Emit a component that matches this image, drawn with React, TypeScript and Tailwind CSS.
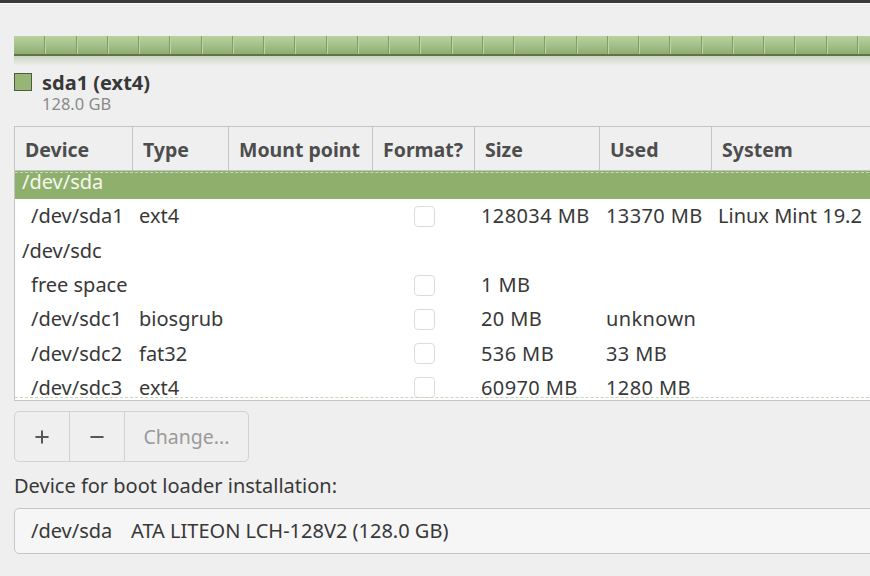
import React from 'react';
import { Plus, Minus } from 'lucide-react';

type Row = {
  device: string;
  type?: string;
  size?: string;
  used?: string;
  system?: string;
  child?: boolean;
  check?: boolean;
  selected?: boolean;
};

const rows: Row[] = [
  { device: '/dev/sda', selected: true },
  { device: '/dev/sda1', type: 'ext4', size: '128034 MB', used: '13370 MB', system: 'Linux Mint 19.2', child: true, check: true },
  { device: '/dev/sdc' },
  { device: 'free space', size: '1 MB', child: true, check: true },
  { device: '/dev/sdc1', type: 'biosgrub', size: '20 MB', used: 'unknown', child: true, check: true },
  { device: '/dev/sdc2', type: 'fat32', size: '536 MB', used: '33 MB', child: true, check: true },
  { device: '/dev/sdc3', type: 'ext4', size: '60970 MB', used: '1280 MB', child: true, check: true },
];

const cols = 'grid grid-cols-[118px_96px_144px_102px_125px_112px_1fr]';

export default function App() {
  return (
    <div
      className="w-[870px] h-[576px] overflow-hidden bg-[#efefef] text-[#383838]"
      style={{ fontFamily: '"Noto Sans", "Open Sans", sans-serif' }}
    >
      {/* window edge */}
      <div className="h-[3px] bg-[#3b3b3b]" />
      <div className="h-px bg-[#fafafa]" />

      <div className="pl-[14px]">
        {/* Partition bar */}
        <div className="mt-[32px] w-[880px]">
          <div className="flex h-[20px] border-b-2 border-[#5f7549] bg-gradient-to-b from-[#b9d2a0] via-[#a4c189] to-[#8ead72]">
            {Array.from({ length: 29 }).map((_, i) => (
              <div key={i} className="w-[31.25px] shrink-0 border-r border-r-[#809d66] shadow-[1px_0_0_#bcd4a6]" />
            ))}
          </div>
          <div className="h-[10px] bg-gradient-to-b from-[#cbd5c1] to-[#efefef]" />
        </div>

        {/* Legend */}
        <div className="mt-[6px] flex items-start gap-[10px]">
          <div className="mt-px h-[18px] w-[18px] border border-[#4f5a45] bg-[#97b676]" />
          <div>
            <div className="text-[20px] font-bold leading-[22px] text-[#383838]">sda1 (ext4)</div>
            <div className="text-[16.5px] leading-[20px] text-[#8a8a8a]">128.0 GB</div>
          </div>
        </div>

        {/* Table */}
        <div className="mt-[12px] w-[900px] border-l border-t border-b border-[#c4c4c4]">
          <div className={`${cols} h-[44px] bg-[#efefef] border-b border-[#c4c4c4] text-[19.5px] font-bold text-[#4d4d4d]`}>
            {['Device', 'Type', 'Mount point', 'Format?', 'Size', 'Used', 'System'].map((h, i) => (
              <div key={h} className={`flex items-center pl-[10px] pt-[3px] ${i < 6 ? 'border-r border-[#c4c4c4]' : ''}`}>
                {h}
              </div>
            ))}
          </div>
          <div className="relative h-[229px] overflow-hidden bg-white text-[20px]">
            <div className="-mt-[6px]">
              {rows.map((r) => (
                <div
                  key={r.device}
                  className={`${cols} h-[34.3px] items-center ${r.selected ? 'bg-[#8fb06d] text-[#f4f7ee]' : ''}`}
                >
                  <div className={`whitespace-nowrap ${r.child ? 'pl-[16px]' : 'pl-[7px]'}`}>{r.device}</div>
                  <div className="pl-[6px]">{r.type}</div>
                  <div />
                  <div className="flex justify-center">
                    {r.check && <div className="h-[21px] w-[21px] rounded-[4px] border border-[#dcdcdc] bg-white" />}
                  </div>
                  <div className="pl-[6px] whitespace-nowrap tracking-[0.02em]">{r.size}</div>
                  <div className="pl-[6px] whitespace-nowrap tracking-[0.02em]">{r.used}</div>
                  <div className="pl-[6px] whitespace-nowrap">{r.system}</div>
                </div>
              ))}
            </div>
            {/* focus rectangle */}
            <div className="absolute inset-x-0 top-px bottom-[2px] border-y border-dashed border-[#c8d6bb] pointer-events-none" />
          </div>
        </div>

        {/* Buttons */}
        <div className="mt-[10px] flex h-[51px] w-[235px] rounded-[5px] border border-[#d2d2d2] bg-[#efefef]">
          <div className="flex w-[55px] items-center justify-center border-r border-[#d2d2d2] text-[#575757]">
            <Plus size={20} strokeWidth={2.4} />
          </div>
          <div className="flex w-[55px] items-center justify-center border-r border-[#d2d2d2] text-[#575757]">
            <Minus size={20} strokeWidth={2.4} />
          </div>
          <div className="flex flex-1 items-center justify-center text-[19.5px] text-[#9a9a9a]">Change...</div>
        </div>

        {/* Boot loader */}
        <div className="mt-[11px] text-[20px] leading-[26px]">Device for boot loader installation:</div>
        <div className="mt-[9px] flex h-[46px] w-[900px] items-center rounded-[5px] border border-[#c6c6c6] bg-[#f6f6f6] pl-[16px] text-[20px]">
          <span className="w-[100px] whitespace-nowrap">/dev/sda</span>
          <span className="whitespace-nowrap">ATA LITEON LCH-128V2 (128.0 GB)</span>
        </div>
      </div>
    </div>
  );
}
